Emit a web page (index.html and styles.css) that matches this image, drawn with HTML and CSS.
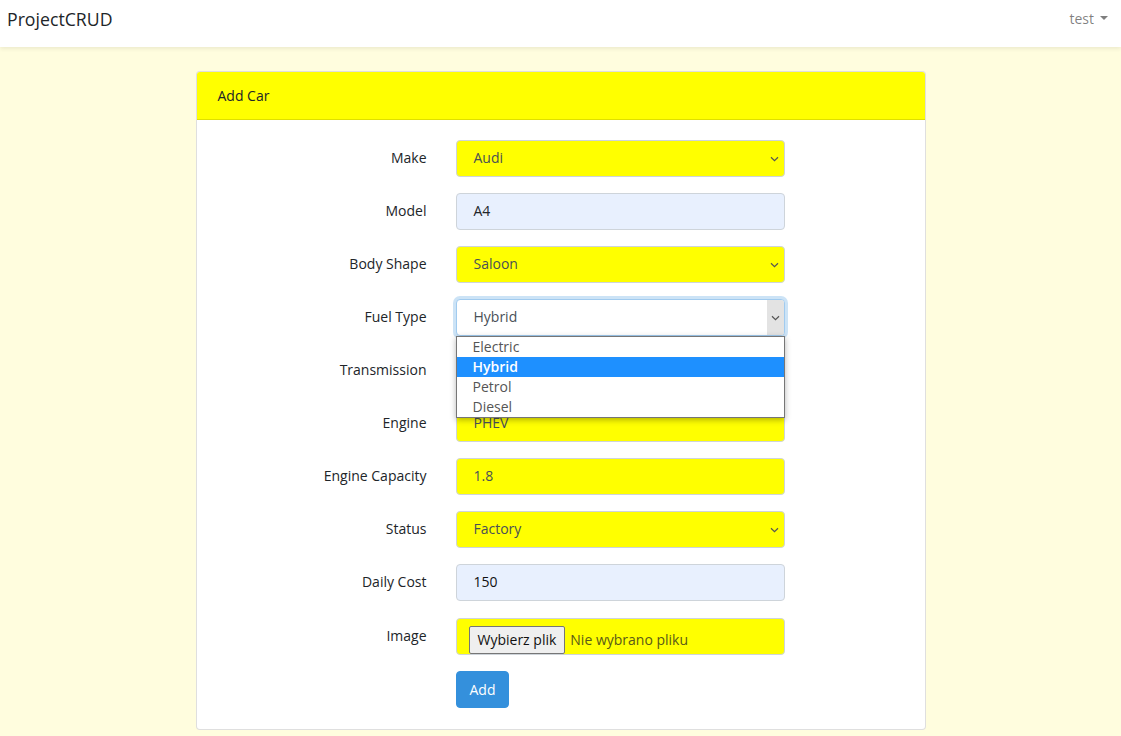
FILE: index.html
```html
<!DOCTYPE html>
<html lang="en">
<head>
<meta charset="utf-8">
<title>ProjectCRUD</title>
<link rel="stylesheet" href="styles.css">
</head>
<body>
<nav class="navbar">
  <a class="brand" href="#">ProjectCRUD</a>
  <div class="user">test<span class="caret"></span></div>
</nav>
<main class="main">
  <div class="card">
    <div class="card-header">Add Car</div>
    <div class="card-body">
      <div class="row">
        <label class="label">Make</label>
        <div class="control select yellow"><span>Audi</span><svg class="chev" width="9" height="6" viewBox="0 0 9 6"><path d="M1 1.2 4.5 4.6 8 1.2" fill="none" stroke="#555" stroke-width="1.2"/></svg></div>
      </div>
      <div class="row">
        <label class="label">Model</label>
        <div class="control autofill"><span>A4</span></div>
      </div>
      <div class="row">
        <label class="label">Body Shape</label>
        <div class="control select yellow"><span>Saloon</span><svg class="chev" width="9" height="6" viewBox="0 0 9 6"><path d="M1 1.2 4.5 4.6 8 1.2" fill="none" stroke="#555" stroke-width="1.2"/></svg></div>
      </div>
      <div class="row">
        <label class="label">Fuel Type</label>
        <div class="wrap">
          <div class="control select focus"><span>Hybrid</span><span class="btnarea"><svg width="9" height="6" viewBox="0 0 9 6"><path d="M1 1.2 4.5 4.6 8 1.2" fill="none" stroke="#555" stroke-width="1.2"/></svg></span></div>
          <ul class="popup">
            <li>Electric</li>
            <li class="sel">Hybrid</li>
            <li>Petrol</li>
            <li>Diesel</li>
          </ul>
        </div>
      </div>
      <div class="row">
        <label class="label">Transmission</label>
        <div class="control select yellow"><span></span><svg class="chev" width="9" height="6" viewBox="0 0 9 6"><path d="M1 1.2 4.5 4.6 8 1.2" fill="none" stroke="#555" stroke-width="1.2"/></svg></div>
      </div>
      <div class="row">
        <label class="label">Engine</label>
        <div class="control yellow"><span>PHEV</span></div>
      </div>
      <div class="row">
        <label class="label">Engine Capacity</label>
        <div class="control yellow"><span>1.8</span></div>
      </div>
      <div class="row">
        <label class="label">Status</label>
        <div class="control select yellow"><span>Factory</span><svg class="chev" width="9" height="6" viewBox="0 0 9 6"><path d="M1 1.2 4.5 4.6 8 1.2" fill="none" stroke="#555" stroke-width="1.2"/></svg></div>
      </div>
      <div class="row cost">
        <label class="label">Daily Cost</label>
        <div class="control autofill dark"><span>150</span></div>
      </div>
      <div class="row">
        <label class="label">Image</label>
        <div class="control file yellow"><span class="filebtn">Wybierz plik</span><span class="filetxt">Nie wybrano pliku</span></div>
      </div>
      <div class="row last">
        <span></span>
        <div><button class="btn">Add</button></div>
      </div>
    </div>
  </div>
</main>
</body>
</html>
```

FILE: styles.css
```css
* { box-sizing: border-box; }
html, body { margin: 0; padding: 0; }
body {
  font-family: "Open Sans", "Noto Sans", sans-serif;
  font-size: 14px;
  line-height: 1.6;
  color: #212529;
  background: #fffdde;
  height: 736px;
  overflow: hidden;
}
.navbar {
  height: 47px;
  background: #fff;
  box-shadow: 0 2px 4px rgba(0,0,0,.075);
  display: flex;
  align-items: center;
  justify-content: space-between;
  padding: 0 13px 0 7px;
  position: relative;
  z-index: 1;
}
.brand {
  font-size: 17.7px;
  color: #212529;
  text-decoration: none;
  margin-top: -9px;
}
.user {
  color: rgba(0,0,0,.5);
  font-size: 14px;
  margin-top: -9px;
  display: flex;
  align-items: center;
}
.caret {
  display: inline-block;
  margin-left: 6px;
  border-top: 4.5px solid rgba(0,0,0,.5);
  border-left: 4.5px solid transparent;
  border-right: 4.5px solid transparent;
  margin-top: -2px;
}
.main {
  padding-top: 24px;
  display: flex;
  justify-content: center;
}
.card {
  width: 730px;
  background: #fff;
  border: 1px solid rgba(0,0,0,.125);
  border-radius: 4px;
}
.card-header {
  background: #ffff00;
  border-bottom: 1px solid rgba(0,0,0,.125);
  padding: 12px 21px;
  line-height: 23px;
  border-radius: 3px 3px 0 0;
}
.card-body {
  padding: 20px 20px 21px;
}
.row {
  display: grid;
  grid-template-columns: 210px 329px;
  column-gap: 29px;
  margin-bottom: 16px;
}
.row.cost { margin-bottom: 17px; }
.row.last { margin-bottom: 0; }
.label {
  text-align: right;
  padding-top: 6px;
  line-height: 23px;
}
.wrap { position: relative; }
.control {
  height: 37px;
  border: 1px solid #ced4da;
  border-radius: 4px;
  display: flex;
  align-items: center;
  padding: 0 16px 0 17px;
  color: #495057;
}
.yellow { background: #ffff00; }
.autofill { background: #e8f0fe; color: #212529; }
.autofill.dark { color: #111; }
.select { padding-right: 5px; }
.select span:first-child { flex: 1; }
.chev { margin-top: 1px; margin-right: 0; }
.focus {
  background: #fff;
  border-color: #a1cbef;
  box-shadow: 0 0 0 3px rgba(52,144,220,.25);
  padding-right: 0;
}
.btnarea {
  width: 17px;
  align-self: stretch;
  background: #e3e3e3;
  display: flex;
  align-items: center;
  justify-content: center;
  border-radius: 0 3px 3px 0;
}
.popup {
  position: absolute;
  left: 0;
  right: 0;
  top: 100%;
  margin: 0;
  padding: 0;
  list-style: none;
  background: #fff;
  border: 1px solid #767676;
  box-shadow: 0 2px 6px rgba(0,0,0,.3);
  z-index: 5;
}
.popup li {
  height: 20px;
  line-height: 20px;
  padding-left: 16px;
  color: #555;
  font-size: 14px;
}
.popup li.sel {
  background: #1e90ff;
  color: #fff;
  font-weight: 600;
}
.file {
  padding: 7px 12px 0;
  align-items: flex-start;
}
.filebtn {
  height: 28px;
  padding: 0 8px;
  background: #efefef;
  border: 1px solid #767676;
  border-radius: 2px;
  color: #111;
  display: flex;
  align-items: center;
  font-size: 14px;
}
.filetxt {
  padding-left: 5px;
  line-height: 28px;
  color: #5a5a18;
}
.btn {
  height: 37px;
  padding: 0 13px;
  background: #3490dc;
  border: 1px solid #3490dc;
  color: #fff;
  border-radius: 4px;
  font-family: inherit;
  font-size: 14px;
}
```
